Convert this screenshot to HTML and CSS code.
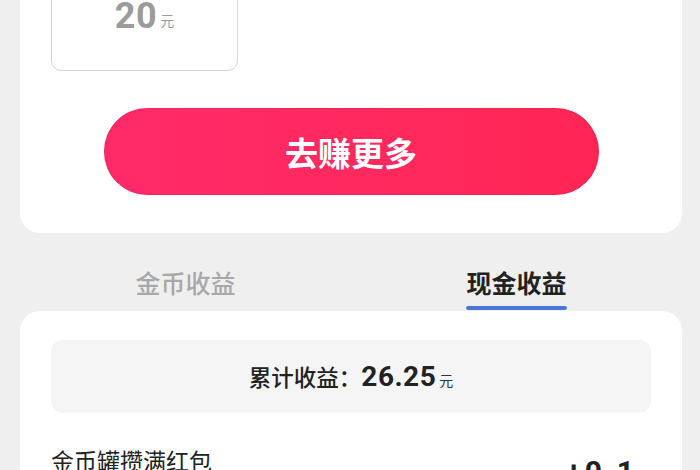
FILE: index.html
```html
<!DOCTYPE html>
<html lang="zh-CN">
<head>
<meta charset="utf-8">
<title>收益</title>
<link rel="stylesheet" href="styles.css">
</head>
<body>
<div class="page">
  <section class="card card-top">
    <div class="amount-box">
      <span class="amount-num">20</span><span class="amount-unit">元</span>
    </div>
    <button class="earn-btn">去赚更多</button>
  </section>

  <nav class="tabs">
    <div class="tab">金币收益</div>
    <div class="tab tab-active">现金收益<span class="tab-line"></span></div>
  </nav>

  <section class="card card-bottom">
    <div class="total-box">
      <span class="total-label">累计收益：</span><span class="total-num">26.25</span><span class="total-unit">元</span>
    </div>
    <div class="record">
      <div class="record-title">金币罐攒满红包</div>
      <div class="record-amount">+0.1<span class="record-unit">元</span></div>
    </div>
  </section>
</div>
</body>
</html>
```

FILE: styles.css
```css
html, body {
  margin: 0;
  padding: 0;
  background: #efefef;
  height: 100%;
  overflow: hidden;
}
body {
  font-family: Roboto, "Noto Sans CJK SC", sans-serif;
  color: #222;
}
.page {
  width: 700px;
  height: 470px;
  overflow: hidden;
}
.card {
  background: #fff;
  margin: 0 18px 0 20px;
}
.card-top {
  margin-top: -40px;
  padding: 30px 31px 38px;
  border-radius: 20px;
}
.amount-box {
  box-sizing: border-box;
  width: 187px;
  height: 81px;
  border: 1px solid #d6d6d6;
  border-radius: 10px;
  display: flex;
  justify-content: center;
  align-items: flex-start;
  padding-top: 5px;
  color: #9b9b9b;
}
.amount-num {
  font-family: Roboto, sans-serif;
  font-weight: 700;
  font-size: 36px;
  line-height: 40px;
  letter-spacing: 0.5px;
}
.amount-unit {
  font-family: "Noto Sans CJK SC", sans-serif;
  font-size: 14px;
  line-height: 14px;
  margin-top: 17px;
  margin-left: 3px;
}
.earn-btn {
  display: block;
  width: 495px;
  height: 87px;
  margin: 37px auto 0;
  border: none;
  border-radius: 44px;
  background: linear-gradient(90deg, #ff2a68 0%, #ff2960 50%, #ff2553 100%);
  box-shadow: inset 0 0 0 1px rgba(190, 30, 70, 0.25);
  color: #fff;
  font-family: "Noto Sans CJK SC", sans-serif;
  font-weight: 700;
  font-size: 33px;
  letter-spacing: 0;
  padding: 0;
}
.tabs {
  display: flex;
  margin: 0 18px 0 20px;
  height: 78px;
  box-sizing: border-box;
  padding-top: 34px;
}
.tab {
  flex: 1;
  display: flex;
  flex-direction: column;
  align-items: center;
  font-family: "Noto Sans CJK SC", sans-serif;
  font-size: 25px;
  line-height: 30px;
  color: #a8a8a8;
  font-weight: 500;
}
.tab-active {
  color: #222;
  font-weight: 700;
}
.tab-line {
  display: block;
  width: 101px;
  height: 4px;
  margin-top: 9px;
  border-radius: 2px;
  background: #4a76d8;
}
.card-bottom {
  height: 300px;
  padding: 29px 31px 0;
  border-radius: 20px 20px 0 0;
}
.total-box {
  height: 73px;
  border-radius: 12px;
  background: #f5f5f5;
  display: flex;
  justify-content: center;
  align-items: baseline;
  line-height: 73px;
}
.total-label {
  font-family: "Noto Sans CJK SC", sans-serif;
  font-size: 22.5px;
  font-weight: 500;
  color: #222;
}
.total-num {
  font-family: Roboto, sans-serif;
  font-weight: 700;
  font-size: 28px;
  letter-spacing: 0.5px;
  color: #222;
}
.total-unit {
  font-family: "Noto Sans CJK SC", sans-serif;
  font-size: 14px;
  margin-left: 3px;
  color: #333;
}
.record {
  display: flex;
  justify-content: space-between;
  align-items: flex-start;
  margin-top: 30px;
}
.record-title {
  font-family: "Noto Sans CJK SC", sans-serif;
  font-size: 23px;
  line-height: 34px;
  color: #222;
}
.record-amount {
  font-family: Roboto, sans-serif;
  font-weight: 700;
  font-size: 30px;
  line-height: 34px;
  margin-top: 12px;
  color: #222;
  letter-spacing: 3px;
}
.record-unit {
  font-family: "Noto Sans CJK SC", sans-serif;
  font-weight: 400;
  font-size: 14px;
  letter-spacing: 0;
}
```
